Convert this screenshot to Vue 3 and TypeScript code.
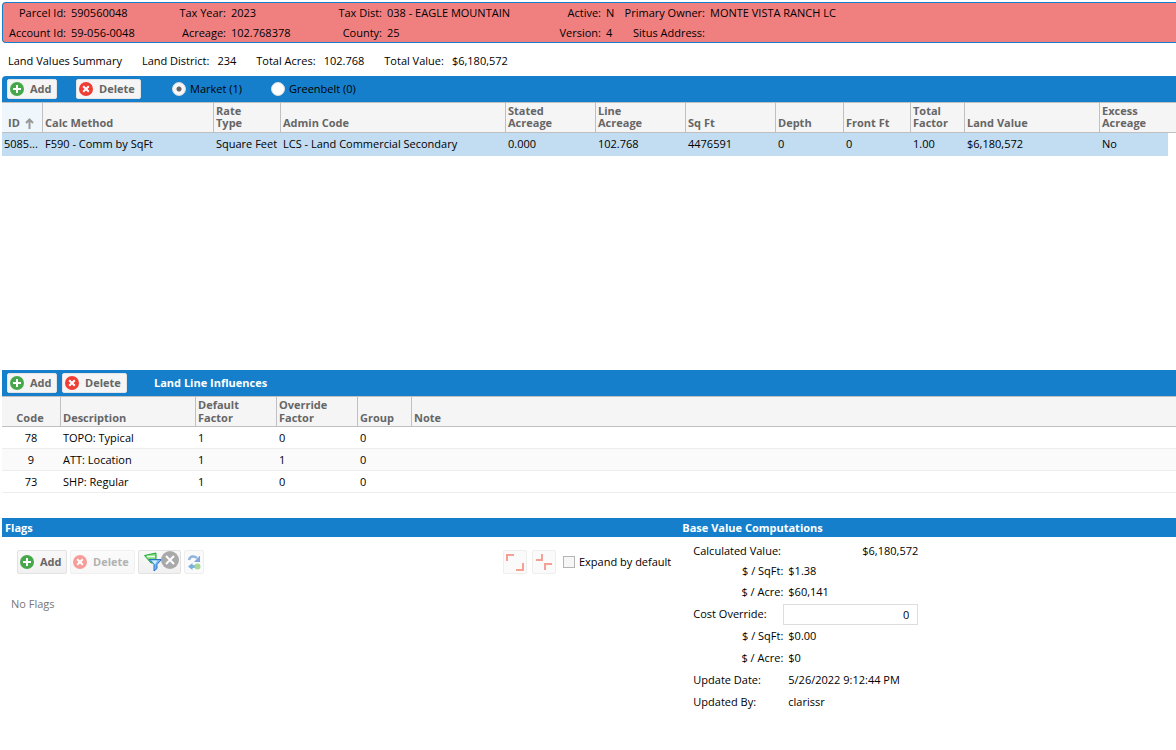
<script setup lang="ts">
import { ref } from 'vue'

interface Field { label: string; value: string }
interface Column { title: string; width?: number; sorted?: boolean }
interface Influence { code: string; description: string; factor: string; override: string; group: string; note: string }

const parcel: Field[] = [
  { label: 'Parcel Id:', value: '590560048' },
  { label: 'Tax Year:', value: '2023' },
  { label: 'Tax Dist:', value: '038 - EAGLE MOUNTAIN' },
  { label: 'Active:', value: 'N' },
  { label: 'Primary Owner:', value: 'MONTE VISTA RANCH LC' },
  { label: 'Account Id:', value: '59-056-0048' },
  { label: 'Acreage:', value: '102.768378' },
  { label: 'County:', value: '25' },
  { label: 'Version:', value: '4' },
  { label: 'Situs Address:', value: '' },
]

const summary: Field[] = [
  { label: 'Land District:', value: '234' },
  { label: 'Total Acres:', value: '102.768' },
  { label: 'Total Value:', value: '$6,180,572' },
]

const landColumns: Column[] = [
  { title: 'ID', width: 40, sorted: true },
  { title: 'Calc Method', width: 171 },
  { title: 'Rate\nType', width: 67 },
  { title: 'Admin Code', width: 225 },
  { title: 'Stated\nAcreage', width: 90 },
  { title: 'Line\nAcreage', width: 90 },
  { title: 'Sq Ft', width: 90 },
  { title: 'Depth', width: 68 },
  { title: 'Front Ft', width: 67 },
  { title: 'Total\nFactor', width: 54 },
  { title: 'Land Value' },
  { title: 'Excess\nAcreage', width: 69 },
]

const landRows: string[][] = [
  ['5085...', 'F590 - Comm by SqFt', 'Square Feet', 'LCS - Land Commercial Secondary', '0.000', '102.768',
    '4476591', '0', '0', '1.00', '$6,180,572', 'No'],
]

const influences: Influence[] = [
  { code: '78', description: 'TOPO: Typical', factor: '1', override: '0', group: '0', note: '' },
  { code: '9', description: 'ATT: Location', factor: '1', override: '1', group: '0', note: '' },
  { code: '73', description: 'SHP: Regular', factor: '1', override: '0', group: '0', note: '' },
]

const view = ref('market')
const expand = ref(false)
const costOverride = ref('0')
</script>

<template>
  <main class="page">
    <dl class="parcel">
      <template v-for="f in parcel" :key="f.label">
        <dt>{{ f.label }}</dt>
        <dd>{{ f.value }}</dd>
      </template>
    </dl>

    <div class="summary">
      <h1>Land Values Summary</h1>
      <p v-for="f in summary" :key="f.label"><span>{{ f.label }}</span><span>{{ f.value }}</span></p>
    </div>

    <section class="land">
      <div class="toolbar rounded">
        <button type="button" class="btn add">
          <svg class="dot" viewBox="0 0 14 14"><circle cx="7" cy="7" r="7" fill="#46a84b" /><path d="M7 3v8M3 7h8" stroke="#fff" stroke-width="2" /></svg>Add
        </button>
        <button type="button" class="btn delete spaced">
          <svg class="dot" viewBox="0 0 14 14"><circle cx="7" cy="7" r="7" fill="#f03e35" /><path d="M4.2 4.2l5.6 5.6M9.8 4.2L4.2 9.8" stroke="#fff" stroke-width="2" /></svg>Delete
        </button>
        <div class="views">
          <label><input v-model="view" type="radio" name="view" value="market">Market (1)</label>
          <label><input v-model="view" type="radio" name="view" value="greenbelt">Greenbelt (0)</label>
        </div>
      </div>
      <table class="grid">
        <colgroup>
          <col v-for="c in landColumns" :key="c.title" :style="c.width ? { width: c.width + 'px' } : {}">
          <col class="gutter">
        </colgroup>
        <thead>
          <tr>
            <th v-for="c in landColumns" :key="c.title" :class="{ sorted: c.sorted }" scope="col"><span>{{ c.title }}</span><svg v-if="c.sorted" class="arrow" viewBox="0 0 9 11"><path d="M4.5 11V2M1 5l3.5-3.5L8 5" fill="none" stroke="#999" stroke-width="2" /></svg></th>
            <td class="blank" />
          </tr>
        </thead>
        <tbody>
          <tr v-for="r in landRows" :key="r[0]" class="selected">
            <td v-for="(cell, i) in r" :key="i">{{ cell }}</td>
            <td class="blank" />
          </tr>
        </tbody>
      </table>
    </section>

    <section class="influences">
      <div class="toolbar">
        <button type="button" class="btn add">
          <svg class="dot" viewBox="0 0 14 14"><circle cx="7" cy="7" r="7" fill="#46a84b" /><path d="M7 3v8M3 7h8" stroke="#fff" stroke-width="2" /></svg>Add
        </button>
        <button type="button" class="btn delete">
          <svg class="dot" viewBox="0 0 14 14"><circle cx="7" cy="7" r="7" fill="#f03e35" /><path d="M4.2 4.2l5.6 5.6M9.8 4.2L4.2 9.8" stroke="#fff" stroke-width="2" /></svg>Delete
        </button>
        <h2>Land Line Influences</h2>
      </div>
      <table class="grid lines">
        <colgroup>
          <col class="c-code"><col class="c-desc"><col class="c-factor"><col class="c-factor"><col class="c-group"><col>
        </colgroup>
        <thead>
          <tr>
            <th scope="col">Code</th>
            <th scope="col">Description</th>
            <th scope="col">Default<br>Factor</th>
            <th scope="col">Override<br>Factor</th>
            <th scope="col">Group</th>
            <th scope="col">Note</th>
          </tr>
        </thead>
        <tbody>
          <tr v-for="r in influences" :key="r.code">
            <td>{{ r.code }}</td>
            <td>{{ r.description }}</td>
            <td>{{ r.factor }}</td>
            <td>{{ r.override }}</td>
            <td>{{ r.group }}</td>
            <td>{{ r.note }}</td>
          </tr>
        </tbody>
      </table>
    </section>

    <div class="bottom">
      <section class="flags">
        <h2 class="bar">Flags</h2>
        <div class="tools">
          <button type="button" class="btn tall add">
            <svg class="dot" viewBox="0 0 14 14"><circle cx="7" cy="7" r="7" fill="#46a84b" /><path d="M7 3v8M3 7h8" stroke="#fff" stroke-width="2" /></svg>Add
          </button>
          <button type="button" class="btn tall delete" disabled>
            <svg class="dot" viewBox="0 0 14 14"><circle cx="7" cy="7" r="7" fill="#f03e35" /><path d="M4.2 4.2l5.6 5.6M9.8 4.2L4.2 9.8" stroke="#fff" stroke-width="2" /></svg>Delete
          </button>
          <button type="button" class="btn tall icon wide" aria-label="Clear filters">
            <svg width="38" height="22" viewBox="0 0 38 22">
              <path d="M3.500 4.500L15 2v9l-5 1z" fill="#7fdc7d" stroke="#22a836" />
              <path d="M6 5.500h8" stroke="#f0fff0" stroke-width="1.500" />
              <path d="M8 8.500h12.500l-4.500 5v4l-3 2.500v-6.500z" fill="#6fb4f0" stroke="#2b72c6" />
              <path d="M10.500 9.500h6l-2.500 4z" fill="#d2eafd" />
              <circle cx="29" cy="9" r="9" fill="#a9a9a9" />
              <path d="M25 5l8 8M33 5l-8 8" stroke="#fff" stroke-width="2" />
            </svg>
          </button>
          <button type="button" class="btn tall icon small" aria-label="Refresh">
            <svg width="14" height="16" viewBox="0 0 14 16">
              <path d="M2 6C3 2 7 1.500 10 4" fill="none" stroke="#8fb4e0" stroke-width="2.500" />
              <path d="M13 1.500V8H7z" fill="#7ea8dc" />
              <path d="M5 12.500h4" stroke="#7fb6de" stroke-width="3" />
              <path d="M1 12.500L5.500 9v7z" fill="#78aee2" />
              <circle cx="10.500" cy="12.500" r="3" fill="#a5d69a" />
            </svg>
          </button>
          <div class="right">
            <button type="button" class="btn tall icon pale" aria-label="Expand all">
              <svg width="18" height="18" viewBox="0 0 18 18"><path d="M1 8V2h7M17 10v7h-7" fill="none" stroke="#f5a095" stroke-width="2" /></svg>
            </button>
            <button type="button" class="btn tall icon pale" aria-label="Collapse all">
              <svg width="18" height="18" viewBox="0 0 18 18"><path d="M7 1v6H1M10 17v-6h7" fill="none" stroke="#f5a095" stroke-width="2" /></svg>
            </button>
            <label class="check"><input v-model="expand" type="checkbox">Expand by default</label>
          </div>
        </div>
        <p class="empty">No Flags</p>
      </section>

      <section class="values">
        <h2 class="bar">Base Value Computations</h2>
        <dl class="calc">
          <dt>Calculated Value:</dt><dd class="total">$6,180,572</dd>
          <dt class="sub">$ / SqFt:</dt><dd>$1.38</dd>
          <dt class="sub">$ / Acre:</dt><dd>$60,141</dd>
          <dt><label for="override">Cost Override:</label></dt>
          <dd class="field"><input id="override" v-model="costOverride" type="text"></dd>
          <dt class="sub">$ / SqFt:</dt><dd>$0.00</dd>
          <dt class="sub">$ / Acre:</dt><dd>$0</dd>
          <dt>Update Date:</dt><dd>5/26/2022 9:12:44 PM</dd>
          <dt>Updated By:</dt><dd>clarissr</dd>
        </dl>
      </section>
    </div>
  </main>
</template>

<style>
body { background: #fff; }
</style>

<style scoped>
.page {
  padding: 2px 0 0 2px;
  overflow-x: clip;
  font: 11px/14px "Open Sans", "Noto Sans", sans-serif;
  color: #000;
}
.page * { box-sizing: border-box; }
h1, h2, p, dl, dd { margin: 0; font: inherit; }
button, input { font: inherit; color: inherit; margin: 0; }

.parcel {
  display: grid;
  grid-template-columns: 63px 95px 55px 95px 51px 156px 53px 9px 85px 1fr;
  grid-auto-rows: 20px;
  column-gap: 5px;
  height: 41px;
  border: 1px solid #157fcc;
  border-right: 0;
  border-radius: 4px 0 0 4px;
  background: #f08080;
  line-height: 20px;
  white-space: nowrap;
}
.parcel dt { text-align: right; }

.summary {
  display: flex;
  align-items: center;
  gap: 20px;
  height: 33px;
  padding: 3px 0 0 6px;
  white-space: nowrap;
}
.summary p { display: flex; gap: 8px; }

.toolbar {
  display: flex;
  align-items: center;
  gap: 5px;
  height: 26px;
  padding-left: 5px;
  background: #157fcc;
}
.rounded { border-top-left-radius: 4px; }
.toolbar h2 { margin-left: 22px; color: #fff; font-weight: 700; }

.btn {
  display: flex;
  align-items: center;
  gap: 6px;
  height: 20px;
  padding: 0 0 0 2px;
  border: 1px solid #e4e4e4;
  border-radius: 2px;
  background: #f5f5f5;
  color: #666;
  font-weight: 700;
}
.btn.add { min-width: 50px; }
.btn.delete { min-width: 65px; }
.dot { width: 14px; height: 14px; flex: none; }
.btn.spaced { margin-left: 14px; }
.btn.tall { height: 24px; border-color: #e2e2e2; background: linear-gradient(#f8f8f8, #f1f1f1); }
.btn:disabled { opacity: .5; }
.btn.icon { justify-content: center; padding: 0; }
.btn.wide { width: 43px; }
.btn.small { width: 20px; border-color: #eee; background: #fafafa; }
.btn.pale { width: 24px; border-color: #eee; background: #fafafa; }

.views { display: flex; gap: 29px; margin-left: 26px; }
.views label, .check { display: flex; align-items: center; }
.views label { gap: 4px; }
.views input {
  appearance: none;
  width: 14px;
  height: 14px;
  border: 1px solid #ddd;
  border-radius: 50%;
  background: #fff;
}
.views input:checked { background: radial-gradient(circle, #666 0 2px, #f6f6f6 3px); }

.land { height: 294px; }
.grid {
  width: 100%;
  table-layout: fixed;
  border-collapse: separate;
  border-spacing: 0;
}
.grid thead > tr { height: 31px; }
.grid th, .grid thead td {
  border-top: 1px solid #c0c0c0;
  border-bottom: 1px solid #c0c0c0;
  background: #f5f5f5;
}
.grid th {
  padding: 0 2px 3px;
  border-left: 1px solid #c0c0c0;
  color: #666;
  font-weight: 700;
  line-height: 12px;
  text-align: left;
  vertical-align: bottom;
  white-space: pre-line;
}
.grid th:first-child { border-left: 0; }
.grid th.sorted { padding-left: 6px; background: #eff6fc; }
.arrow { width: 9px; height: 11px; margin-left: 5px; vertical-align: -2px; }
.grid td { padding: 0 0 0 3px; white-space: nowrap; overflow: hidden; }
.grid td:first-child { padding-left: 2px; }
.selected { height: 23px; }
.selected td { padding-bottom: 2px; background: #c2dcf1; }
.selected td.blank { background: #fff; }
.gutter { width: 8px; }

.lines th { padding-bottom: 2px; line-height: 13px; }
.lines th:first-child, .lines td:first-child { padding-left: 0; text-align: center; }
.lines tbody tr { height: 22px; }
.lines tbody td { border-bottom: 1px solid #ededed; }
.lines tbody tr:nth-child(even) { background: #fafafa; }
.c-code { width: 58px; }
.c-desc { width: 135px; }
.c-factor { width: 81px; }
.c-group { width: 54px; }

.bottom {
  display: grid;
  grid-template-columns: 15fr 11fr;
  margin-top: 25px;
}
.bar {
  height: 19px;
  padding-left: 3px;
  background: #157fcc;
  color: #fff;
  font-weight: 700;
  line-height: 19px;
}
.tools { display: flex; gap: 3px; padding: 13px 8px 0 15px; }
.right { display: flex; align-items: center; gap: 5px; margin-left: auto; }
.check { gap: 4px; margin-left: 2px; }
.check input {
  appearance: none;
  width: 12px;
  height: 12px;
  border: 1px solid #b5b5b5;
  background: #f6f6f6;
}
.empty { padding: 23px 0 0 9px; color: #777; }

.calc {
  display: grid;
  grid-template-columns: 90px 130px;
  grid-template-rows: 20px 20px;
  grid-auto-rows: 22px;
  column-gap: 5px;
  align-items: center;
  padding: 4px 0 0 14px;
}
.calc .sub, .total { text-align: right; }
.calc .field { margin-left: -5px; }
.field input {
  display: block;
  width: 100%;
  height: 21px;
  padding: 0 8px;
  border: 1px solid #ddd;
  background: #fff;
  text-align: right;
}
</style>
